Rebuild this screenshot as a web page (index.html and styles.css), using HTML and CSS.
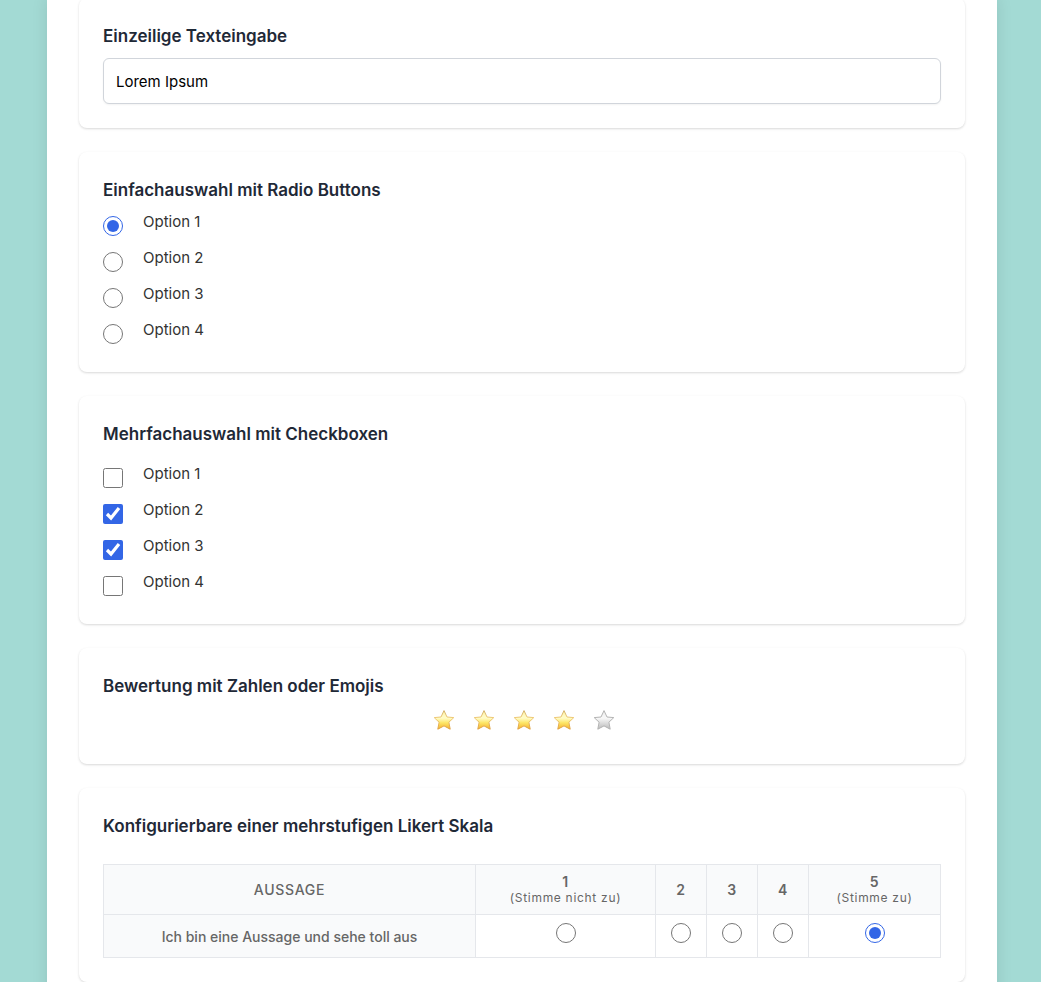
FILE: index.html
```html
<!DOCTYPE html>
<html lang="de">
<head>
  <meta charset="UTF-8">
  <meta name="viewport" content="width=device-width, initial-scale=1">
  <title>Umfrage</title>
  <link rel="stylesheet" href="styles.css">
</head>
<body>

  <!-- star shape and fills used by the rating -->
  <svg class="defs" width="0" height="0" aria-hidden="true">
    <defs>
      <linearGradient id="gold" x1="0" y1="0" x2="0" y2="1">
        <stop offset="0" stop-color="#fff3a8"/>
        <stop offset="0.4" stop-color="#fffcc8"/>
        <stop offset="0.65" stop-color="#fde768"/>
        <stop offset="1" stop-color="#f5b02c"/>
      </linearGradient>
      <linearGradient id="goldEdge" x1="0" y1="0" x2="0" y2="1">
        <stop offset="0" stop-color="#cfae68"/>
        <stop offset="0.4" stop-color="#efca78"/>
        <stop offset="1" stop-color="#dfa040"/>
      </linearGradient>
      <linearGradient id="grey" x1="0" y1="0" x2="0" y2="1">
        <stop offset="0" stop-color="#ededed"/>
        <stop offset="0.4" stop-color="#f8f8f8"/>
        <stop offset="1" stop-color="#bababa"/>
      </linearGradient>
      <symbol id="star" viewBox="0 0 24 24">
        <path d="M12 2.6 L15 9 L21.8 9.6 L16.9 14.2 L18.2 21.2 L12 17.9 L5.8 21.2 L7.1 14.2 L2.2 9.6 L9 9 Z" stroke-width="1" stroke-linejoin="round"/>
      </symbol>
    </defs>
  </svg>

  <form class="survey">
    <section class="card">
      <h2><label for="textInput">Einzeilige Texteingabe</label></h2>
      <input class="text-input" type="text" id="textInput" value="Lorem Ipsum">
    </section>

    <section class="card">
      <h2 id="radioTitle">Einfachauswahl mit Radio Buttons</h2>
      <div class="options" role="radiogroup" aria-labelledby="radioTitle">
        <label class="option"><input type="radio" name="single" checked><span>Option 1</span></label>
        <label class="option"><input type="radio" name="single"><span>Option 2</span></label>
        <label class="option"><input type="radio" name="single"><span>Option 3</span></label>
        <label class="option"><input type="radio" name="single"><span>Option 4</span></label>
      </div>
    </section>

    <section class="card">
      <h2 id="checkTitle">Mehrfachauswahl mit Checkboxen</h2>
      <div class="options options-multi" role="group" aria-labelledby="checkTitle">
        <label class="option"><input type="checkbox"><span>Option 1</span></label>
        <label class="option"><input type="checkbox" checked><span>Option 2</span></label>
        <label class="option"><input type="checkbox" checked><span>Option 3</span></label>
        <label class="option"><input type="checkbox"><span>Option 4</span></label>
      </div>
    </section>

    <section class="card">
      <h2>Bewertung mit Zahlen oder Emojis</h2>
      <div class="rating">
        <button type="button" class="star on" aria-label="1 Stern"><svg><use href="#star"/></svg></button>
        <button type="button" class="star on" aria-label="2 Sterne"><svg><use href="#star"/></svg></button>
        <button type="button" class="star on" aria-label="3 Sterne"><svg><use href="#star"/></svg></button>
        <button type="button" class="star on" aria-label="4 Sterne"><svg><use href="#star"/></svg></button>
        <button type="button" class="star" aria-label="5 Sterne"><svg><use href="#star"/></svg></button>
      </div>
    </section>

    <section class="card">
      <h2>Konfigurierbare einer mehrstufigen Likert Skala</h2>
      <table class="likert">
        <colgroup>
          <col>
          <col class="col-first">
          <col class="col-mid">
          <col class="col-mid">
          <col class="col-mid">
          <col class="col-last">
        </colgroup>
        <thead>
          <tr>
            <th class="statement-head">Aussage</th>
            <th>1<small>(Stimme nicht zu)</small></th>
            <th>2</th>
            <th>3</th>
            <th>4</th>
            <th>5<small>(Stimme zu)</small></th>
          </tr>
        </thead>
        <tbody>
          <tr>
            <th scope="row">Ich bin eine Aussage und sehe toll aus</th>
            <td><input type="radio" name="likert" aria-label="1"></td>
            <td><input type="radio" name="likert" aria-label="2"></td>
            <td><input type="radio" name="likert" aria-label="3"></td>
            <td><input type="radio" name="likert" aria-label="4"></td>
            <td><input type="radio" name="likert" aria-label="5" checked></td>
          </tr>
        </tbody>
      </table>
    </section>
  </form>

</body>
</html>
```

FILE: styles.css
```css
* {
  box-sizing: border-box;
}

body {
  margin: 0;
  padding: 0 44px 0 47px;
  background-color: #a3dad4;
  color: #333;
  font-family: Inter, "Liberation Sans", sans-serif;
  font-size: 15px;
}

.defs {
  position: absolute;
}

.survey {
  display: flex;
  flex-direction: column;
  gap: 24px;
  margin-top: -2px;
  padding: 0 32px 24px;
  background-color: #fff;
  box-shadow: 0 0 15px rgba(0, 0, 0, 0.1);
}

.card {
  padding: 24px;
  border-radius: 8px;
  background-color: #fff;
  box-shadow: 0 1px 3px rgba(0, 0, 0, 0.1), 0 1px 2px rgba(0, 0, 0, 0.06);
}

h2 {
  margin: 0 0 8px;
  color: #1f2937;
  font-size: 17px;
  font-weight: 600;
  line-height: 28px;
}

.text-input {
  display: block;
  width: 100%;
  height: 46px;
  padding: 0 12px;
  border: 1px solid #d1d5db;
  border-radius: 6px;
  background-color: #fff;
  box-shadow: 0 1px 2px rgba(0, 0, 0, 0.05);
  color: #000;
  font: inherit;
}

input[type="radio"],
input[type="checkbox"] {
  width: 20px;
  height: 20px;
  margin: 0;
  accent-color: #3366e6;
}

.options {
  display: flex;
  flex-direction: column;
  gap: 8px;
}

.options-multi {
  margin-top: 16px;
}

.option {
  display: flex;
  align-items: center;
  gap: 20px;
  height: 28px;
}

.option span {
  align-self: flex-start;
  line-height: 20px;
}

/* Rating */
.rating {
  display: flex;
  justify-content: center;
  gap: 16px;
  height: 32px;
  padding-left: 4px;
}

.star {
  width: 24px;
  height: 24px;
  padding: 0;
  border: 0;
  background: none;
  cursor: pointer;
}

.star svg {
  display: block;
  width: 24px;
  height: 24px;
  fill: url(#grey);
  stroke: #b4b4b4;
}

.star.on svg {
  fill: url(#gold);
  stroke: url(#goldEdge);
}

/* Likert */
.likert {
  width: 100%;
  margin-top: 24px;
  border-collapse: collapse;
  table-layout: fixed;
  color: #666;
  font-size: 14px;
  text-align: center;
}

.col-first {
  width: 180px;
}

.col-mid {
  width: 51px;
}

.col-last {
  width: 132px;
}

.likert th,
.likert td {
  padding: 0;
  border: 1px solid #e5e7eb;
}

.likert th {
  background-color: #f9fafb;
  font-weight: 500;
}

.likert thead th {
  height: 50px;
  font-weight: 600;
  letter-spacing: 0.05em;
  line-height: 16px;
}

.likert thead .statement-head {
  font-weight: 500;
  text-transform: uppercase;
}

.likert small {
  display: block;
  font-size: 12px;
  font-weight: 400;
}

.likert td {
  height: 43px;
  padding-top: 8px;
  vertical-align: top;
}
```
